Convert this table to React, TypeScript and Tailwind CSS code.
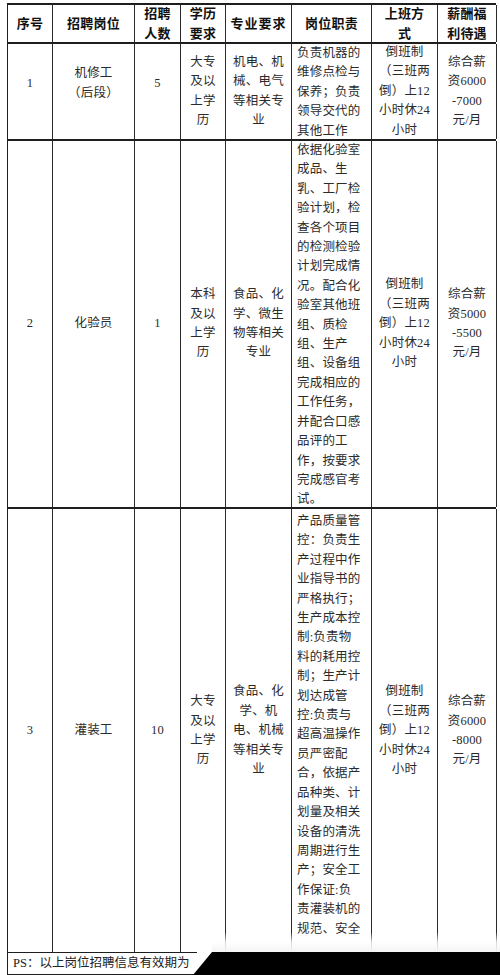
import React from "react";

const FONT = { fontFamily: '"Liberation Serif", "Noto Sans CJK SC", serif' };

type Row = {
  no: string;
  pos: string[];
  num: string;
  edu: string[];
  major: string[];
  duty: string[];
  shift: string[];
  pay: string[];
  h: string;
  lift: boolean;
  dutyPad: string;
};

const rows: Row[] = [
  {
    no: "1",
    pos: ["机修工", "（后段）"],
    num: "5",
    edu: ["大专", "及以", "上学", "历"],
    major: ["机电、机", "械、电气", "等相关专", "业"],
    duty: ["负责机器的", "维修点检与", "保养；负责", "领导交代的", "其他工作"],
    shift: ["倒班制", "（三班两", "倒）上12", "小时休24", "小时"],
    pay: ["综合薪", "资6000", "-7000", "元/月"],
    h: "h-[97px]",
    lift: true,
    dutyPad: "pt-0",
  },
  {
    no: "2",
    pos: ["化验员"],
    num: "1",
    edu: ["本科", "及以", "上学", "历"],
    major: ["食品、化", "学、微生", "物等相关", "专业"],
    duty: [
      "依据化验室",
      "成品、生",
      "乳、工厂检",
      "验计划，检",
      "查各个项目",
      "的检测检验",
      "计划完成情",
      "况。配合化",
      "验室其他班",
      "组、质检",
      "组、生产",
      "组、设备组",
      "完成相应的",
      "工作任务，",
      "并配合口感",
      "品评的工",
      "作，按要求",
      "完成感官考",
      "试。",
    ],
    shift: ["倒班制", "（三班两", "倒）上12", "小时休24", "小时"],
    pay: ["综合薪", "资5000", "-5500", "元/月"],
    h: "h-[368px]",
    lift: false,
    dutyPad: "pt-0",
  },
  {
    no: "3",
    pos: ["灌装工"],
    num: "10",
    edu: ["大专", "及以", "上学", "历"],
    major: ["食品、化", "学、机", "电、机械", "等相关专", "业"],
    duty: [
      "产品质量管",
      "控：负责生",
      "产过程中作",
      "业指导书的",
      "严格执行；",
      "生产成本控",
      "制:负责物",
      "料的耗用控",
      "制；生产计",
      "划达成管",
      "控:负责与",
      "超高温操作",
      "员严密配",
      "合，依据产",
      "品种类、计",
      "划量及相关",
      "设备的清洗",
      "周期进行生",
      "产；安全工",
      "作保证:负",
      "责灌装机的",
      "规范、安全",
    ],
    shift: ["倒班制", "（三班两", "倒）上12", "小时休24", "小时"],
    pay: ["综合薪", "资6000", "-8000", "元/月"],
    h: "h-[446px]",
    lift: false,
    dutyPad: "pt-[3px]",
  },
];

function Lines({ lines }: { lines: string[] }) {
  return (
    <>
      {lines.map((l, i) => (
        <div key={i} className="whitespace-nowrap">
          {l}
        </div>
      ))}
    </>
  );
}

const cellBase =
  "flex flex-col items-center justify-center text-center border-r border-[#2a2a2a] overflow-hidden";

export default function App() {
  return (
    <div
      className="w-[500px] h-[975px] bg-white flex flex-col overflow-hidden text-[#2b2b2b]"
      style={FONT}
    >
      <div className="relative h-[952px] overflow-hidden pl-[7px] pt-[3px]">
        <div className="w-[489px] border-l border-t-2 border-[#1e1e1e] text-[12.5px] leading-[19.4px] tracking-[0.2px]">
          {/* header */}
          <div className="grid grid-cols-[45px_82px_46px_45px_66px_80px_66px_59px] h-[39px] border-b-2 border-[#1e1e1e] font-bold text-[13px] leading-[20px] text-[#111]">
            <div className={cellBase}>序号</div>
            <div className={cellBase}>招聘岗位</div>
            <div className={cellBase}>
              <Lines lines={["招聘", "人数"]} />
            </div>
            <div className={cellBase}>
              <Lines lines={["学历", "要求"]} />
            </div>
            <div className={cellBase + " tracking-[1px]"}>专业要求</div>
            <div className={cellBase}>岗位职责</div>
            <div className={cellBase}>
              <Lines lines={["上班方", "式"]} />
            </div>
            <div className={cellBase}>
              <Lines lines={["薪酬福", "利待遇"]} />
            </div>
          </div>
          {rows.map((r) => (
            <div
              key={r.no}
              className={
                "grid grid-cols-[45px_82px_46px_45px_66px_80px_66px_59px] border-b-2 border-[#1e1e1e] " +
                r.h
              }
            >
              <div className={cellBase + (r.lift ? " pb-[16px]" : "")}>{r.no}</div>
              <div className={cellBase + (r.lift ? " pb-[16px]" : "")}>
                <Lines lines={r.pos} />
              </div>
              <div className={cellBase + (r.lift ? " pb-[16px]" : "")}>{r.num}</div>
              <div className={cellBase}>
                <Lines lines={r.edu} />
              </div>
              <div className={cellBase}>
                <Lines lines={r.major} />
              </div>
              <div
                className={
                  "flex flex-col items-start justify-start text-left pl-[5px] border-r border-[#2a2a2a] overflow-hidden " +
                  r.dutyPad
                }
              >
                <Lines lines={r.duty} />
              </div>
              <div className={cellBase}>
                <Lines lines={r.shift} />
              </div>
              <div className={cellBase}>
                <Lines lines={r.pay} />
              </div>
            </div>
          ))}
        </div>
        <div className="absolute left-[212px] right-0 bottom-0 h-[20px] bg-gradient-to-b from-white/0 via-white/80 to-[#f4f4f4]" />
      </div>
      <div className="flex h-[23px]">
        <div className="w-[7px] bg-white" />
        <div className="w-[190px] border-l border-t border-b border-[#1e1e1e] bg-white flex items-center pl-[5px] text-[12.5px] text-[#222] whitespace-nowrap">
          PS：以上岗位招聘信息有效期为
        </div>
        <div className="flex-1 -ml-[4px] bg-black [clip-path:polygon(19px_0,100%_0,100%_100%,0_100%)]" />
      </div>
    </div>
  );
}
